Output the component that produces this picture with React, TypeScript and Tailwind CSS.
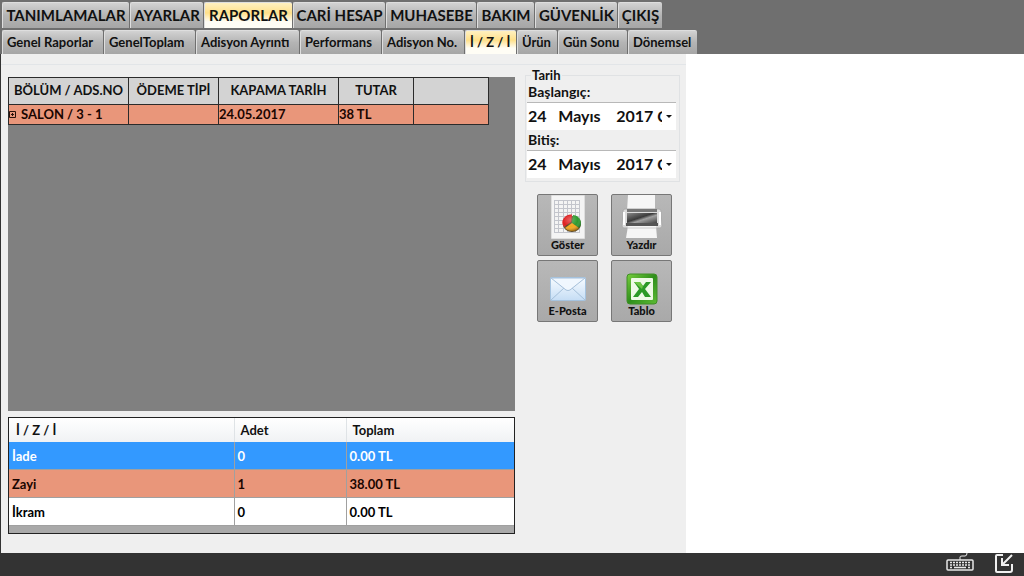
import React, { useState } from "react";

interface Tab {
  label: string;
  width: string;
}

const mainTabs: Tab[] = [
  { label: "TANIMLAMALAR", width: "w-[127px]" },
  { label: "AYARLAR", width: "w-[73px]" },
  { label: "RAPORLAR", width: "w-[88px]" },
  { label: "CARİ HESAP", width: "w-[92px]" },
  { label: "MUHASEBE", width: "w-[90px]" },
  { label: "BAKIM", width: "w-[57px]" },
  { label: "GÜVENLİK", width: "w-[82px]" },
  { label: "ÇIKIŞ", width: "w-[44px]" },
];

const subTabs: Tab[] = [
  { label: "Genel Raporlar", width: "w-[101px]" },
  { label: "GenelToplam", width: "w-[91px]" },
  { label: "Adisyon Ayrıntı", width: "w-[103px]" },
  { label: "Performans", width: "w-[81px]" },
  { label: "Adisyon No.", width: "w-[82px]" },
  { label: "İ / Z / İ", width: "w-[51px]" },
  { label: "Ürün", width: "w-[40px]" },
  { label: "Gün Sonu", width: "w-[69px]" },
  { label: "Dönemsel", width: "w-[69px]" },
];

const totals = [
  { name: "İade", count: "0", total: "0.00 TL", row: "bg-[#3399ff] text-white" },
  { name: "Zayi", count: "1", total: "38.00 TL", row: "bg-[#e9967a] text-[#1a0500]" },
  { name: "İkram", count: "0", total: "0.00 TL", row: "bg-white text-black" },
];

const tabNormal = "bg-linear-to-b from-[#d2d2d2] via-[#b4b4b4] to-[#a6a6a6]";
const tabActive = "bg-linear-to-b from-[#fff0c0] via-[#ffe08a] via-40% to-[#fffdf5] to-75%";

const ReportIcon = () => (
  <svg width="34" height="44" viewBox="0 0 34 44" aria-hidden="true">
    <defs>
      <radialGradient id="pieShade" cx="40%" cy="30%" r="70%">
        <stop offset="0" stopColor="#fff" stopOpacity="0.3" />
        <stop offset="0.6" stopColor="#fff" stopOpacity="0" />
        <stop offset="1" stopColor="#000" stopOpacity="0.35" />
      </radialGradient>
    </defs>
    <path d="M0 0H34V44H0Z" fill="#f4f4f4" stroke="#c9c9c9" />
    <path
      d="M3 5.5H29M3 9.5H29M3 13.5H29M3 17.5H29M3 21.5H29M3 25.500H29M3 29.500H29M3 33.500H29M3 37.5H29M3.500 5V38M7.500 5V38M12.500 5V38M16.500 5V38M20.500 5V38M24.500 5V38M28.500 5V38"
      stroke="#c3c5cc"
      fill="none"
    />
    <ellipse cx="21" cy="29" rx="9" ry="8" fill="#5e4a26" />
    <path d="M21 28L22 20A9 8 0 0 1 28 33Z" fill="#2f9a2f" />
    <path d="M21 28L28 33A9 8 0 0 1 14 33Z" fill="#f6a81c" />
    <path d="M20 27L13 32A9 8 0 0 1 21 19.500Z" fill="#de1f1f" />
    <ellipse cx="21" cy="28" rx="9" ry="8" fill="url(#pieShade)" />
  </svg>
);

const PrinterIcon = () => (
  <svg width="42" height="44" viewBox="0 0 42 44" aria-hidden="true">
    <defs>
      <linearGradient id="slot" x1="0" y1="0" x2="1" y2="1">
        <stop offset="0" stopColor="#8a8a8a" />
        <stop offset="0.45" stopColor="#3b3b3b" />
        <stop offset="0.6" stopColor="#a0a0a0" />
        <stop offset="1" stopColor="#444" />
      </linearGradient>
    </defs>
    <path d="M7 0H34V16H6Z" fill="#f6f6f6" />
    <path d="M2 16Q2 14 4 14H38Q40 14 40 16L41 31Q41 33 39 33H3Q1 33 1 31Z" fill="#dcdcdc" stroke="#aaa" />
    <path d="M6 14H36V17H6Z" fill="#777" />
    <path d="M6 18H36V28H6Z" fill="url(#slot)" />
    <path d="M5 28H37V31H5Z" fill="#555" />
    <path d="M3 17V30M39 17V30" stroke="#fff" strokeWidth="2" />
    <path d="M7 31H35L36 43H5Z" fill="#f5f5f5" />
    <path d="M7 33H35" stroke="#ccc" />
  </svg>
);

const MailIcon = () => (
  <svg width="36" height="28" viewBox="0 0 36 28" aria-hidden="true">
    <defs>
      <linearGradient id="paper" x1="0" y1="0" x2="0" y2="1">
        <stop offset="0" stopColor="#f8fcff" />
        <stop offset="1" stopColor="#c5ddf5" />
      </linearGradient>
    </defs>
    <rect x="0.500" y="0.500" width="35" height="23" rx="1" fill="url(#paper)" stroke="#a5c3df" />
    <path d="M1 23L14 11M35 23L22 11" stroke="#a5c0da" fill="none" />
    <path d="M1 1L16 13Q18 14 20 13L35 1Z" fill="#f0f7fe" stroke="#a5c0da" />
  </svg>
);

const ExcelIcon = () => (
  <svg width="32" height="32" viewBox="0 0 32 32" aria-hidden="true">
    <defs>
      <linearGradient id="frame" x1="0" y1="0" x2="1" y2="1">
        <stop offset="0" stopColor="#79cf3e" />
        <stop offset="0.5" stopColor="#2f8f1c" />
        <stop offset="1" stopColor="#5dbc34" />
      </linearGradient>
    </defs>
    <rect x="1" y="1" width="30" height="30" rx="3" fill="url(#frame)" stroke="#3f8e26" />
    <rect x="5" y="5" width="22" height="22" rx="1" fill="#eefae6" />
    <path d="M8 9H14L17 13L20 9H25L19 16L25 24H19L16 19L12 24H7L13 16Z" fill="#2b9a26" />
    <path d="M8 9H14L17 13L16 16Z" fill="#6dc544" />
  </svg>
);

const actions = [
  { label: "Göster", icon: <ReportIcon /> },
  { label: "Yazdır", icon: <PrinterIcon /> },
  { label: "E-Posta", icon: <MailIcon /> },
  { label: "Tablo", icon: <ExcelIcon /> },
];

interface DateFieldProps {
  id: string;
  label: string;
}

const DateField = ({ id, label }: DateFieldProps) => {
  const [value, setValue] = useState("24   Mayıs    2017 Çarşamba");

  return (
    <div>
      <label htmlFor={id} className="block h-5 pl-px text-sm leading-5">
        {label}
      </label>
      <div className="flex h-7 border-t border-[#b8b8b8] bg-white">
        <input
          id={id}
          value={value}
          onChange={(e) => setValue(e.target.value)}
          className="w-0 grow pb-0.5 pl-px text-base font-bold outline-none"
        />
        <button type="button" aria-label={label + " takvim"} className="flex w-3.5 items-center justify-center">
          <svg width="6" height="4" viewBox="0 0 6 4" aria-hidden="true">
            <path d="M0 0H6L3 3Z" fill="#111" />
          </svg>
        </button>
      </div>
    </div>
  );
};

const App = () => {
  const [mainTab, setMainTab] = useState("RAPORLAR");
  const [subTab, setSubTab] = useState("İ / Z / İ");

  return (
    <div className="flex min-h-screen flex-col bg-[#6f6f6f] font-['Lato',sans-serif] font-bold text-[#111]">
      {/* Tabs */}
      <nav className="flex gap-px pt-0.5 pl-0.5">
        {mainTabs.map((tab) => (
          <button
            key={tab.label}
            type="button"
            onClick={() => setMainTab(tab.label)}
            className={`${tab.width} ${mainTab === tab.label ? tabActive : tabNormal} h-[26px] shrink-0 rounded-t-xs border-t border-l border-[#dedede] pb-0.5 text-[15px] leading-6 whitespace-nowrap`}
          >
            {tab.label}
          </button>
        ))}
      </nav>
      <nav className="flex gap-px pt-0.5 pl-0.5">
        {subTabs.map((tab) => (
          <button
            key={tab.label}
            type="button"
            onClick={() => setSubTab(tab.label)}
            className={`${tab.width} ${subTab === tab.label ? tabActive : tabNormal} h-6 shrink-0 rounded-t-xs border-t border-l border-[#dedede] pb-0.5 pl-1 text-left text-[13px] leading-5 whitespace-nowrap`}
          >
            {tab.label}
          </button>
        ))}
      </nav>

      <main className="flex grow bg-white">
        <div className="flex w-[67%] flex-col border-l border-[#333] bg-[#efefef] pt-2.5">
          <div className="flex grow border-t border-[#e2e5e8] pr-1.5">
            {/* Report grid and totals */}
            <section className="flex grow flex-col gap-1.5 pt-3 pb-[19px] pl-[7px]">
              <div className="grow bg-[#808080]">
                <table className="w-[481px] table-fixed border-collapse text-[13px]">
                  <thead>
                    <tr className="h-[27px] bg-[#d3d3d3]">
                      <th className="w-[120px] border border-[#2b2b2b] p-0 whitespace-nowrap">BÖLÜM / ADS.NO</th>
                      <th className="w-[90px] border border-[#2b2b2b] p-0 whitespace-nowrap">ÖDEME TİPİ</th>
                      <th className="w-[120px] border border-[#2b2b2b] p-0">KAPAMA TARİH</th>
                      <th className="w-[75px] border border-[#2b2b2b] p-0">TUTAR</th>
                      <th className="w-[75px] border border-[#2b2b2b] p-0"></th>
                    </tr>
                  </thead>
                  <tbody>
                    <tr className="h-5 bg-[#e9967a] text-[#1a0500]">
                      <td className="border border-[#2b2b2b] p-0">
                        <span className="flex items-center gap-[5px] leading-[19px]">
                          <svg width="7" height="7" viewBox="0 0 7 7" aria-hidden="true">
                            <path d="M0.500 0.500H6.500V6.500H0.500Z" stroke="#2a1008" fill="none" />
                            <path d="M2 3.500H5M3.500 2V5" stroke="#2a1008" />
                          </svg>
                          SALON / 3 - 1
                        </span>
                      </td>
                      <td className="border border-[#2b2b2b] p-0"></td>
                      <td className="border border-[#2b2b2b] p-0 leading-[19px]">24.05.2017</td>
                      <td className="border border-[#2b2b2b] p-0 leading-[19px]">38 TL</td>
                      <td className="border border-[#2b2b2b] p-0"></td>
                    </tr>
                  </tbody>
                </table>
              </div>

              <div className="border border-[#222] bg-[#a9a9a9] pb-[7px]">
                <table className="w-full table-fixed border-collapse text-left text-[13px]">
                  <thead>
                    <tr className="h-6 bg-linear-to-b from-white to-[#f0f2f4]">
                      <th className="w-[225px] border-r border-[#dfe3e6] p-0 pt-0.5 pl-[7px]">İ / Z / İ</th>
                      <th className="w-[112px] border-r border-[#dfe3e6] p-0 pt-0.5 pl-1.5">Adet</th>
                      <th className="p-0 pt-0.5 pl-1.5">Toplam</th>
                    </tr>
                  </thead>
                  <tbody>
                    {totals.map((item) => (
                      <tr key={item.name} className={`${item.row} h-7 border-b border-[#a0a0a0]`}>
                        <td className="border-r border-[#a0a0a0] p-0 pt-0.5 pl-[3px]">{item.name}</td>
                        <td className="border-r border-[#a0a0a0] p-0 pt-0.5 pl-[3px]">{item.count}</td>
                        <td className="p-0 pt-0.5 pl-[3px]">{item.total}</td>
                      </tr>
                    ))}
                  </tbody>
                </table>
              </div>
            </section>

            {/* Date range and actions */}
            <aside className="w-[165px] shrink-0 pl-2.5">
              <fieldset className="h-[117px] border border-[#e0e2e4] pr-[3px] pl-px">
                <legend className="ml-1 px-px text-[13px] leading-5">Tarih</legend>
                <div className="-mt-[3px] flex flex-col">
                  <DateField id="start" label="Başlangıç:" />
                  <DateField id="end" label="Bitiş:" />
                </div>
              </fieldset>
              <div className="mt-3 ml-3 grid grid-cols-[61px_61px] gap-x-[13px] gap-y-1">
                {actions.map((action) => (
                  <button
                    key={action.label}
                    type="button"
                    className="flex h-[62px] flex-col items-center justify-end rounded-xs border border-[#777] bg-linear-to-b from-[#b8b8b8] to-[#a9a9a9] pb-1 text-[11px] leading-3 font-black"
                  >
                    {action.icon}
                    {action.label}
                  </button>
                ))}
              </div>
            </aside>
          </div>
        </div>
      </main>

      <footer className="flex h-[23px] items-start justify-end gap-5 bg-[#333] pr-2.5">
        <button type="button" aria-label="Klavye">
          <svg width="28" height="20" viewBox="0 0 28 20" fill="none" stroke="#e8e8e8" aria-hidden="true">
            <rect x="1" y="7" width="26" height="10" rx="1" strokeWidth="1.500" />
            <path d="M14 7V4Q14 3 16 3H19Q21 3 21 0" />
            <path d="M4 9.500H24M4 12H24" strokeWidth="1.500" strokeDasharray="2 1" />
            <path d="M4 14.500H6M8 14.500H20M22 14.500H24" strokeWidth="1.500" />
          </svg>
        </button>
        <button type="button" aria-label="Küçült">
          <svg width="20" height="20" viewBox="0 0 20 20" fill="none" stroke="#f0f0f0" strokeWidth="2" aria-hidden="true">
            <path d="M9 2H3Q2 2 2 3V18Q2 19 3 19H16Q18 19 18 17V11" />
            <path d="M18 2L9 11M8 5V12H15" />
          </svg>
        </button>
      </footer>
    </div>
  );
};

export default App;
